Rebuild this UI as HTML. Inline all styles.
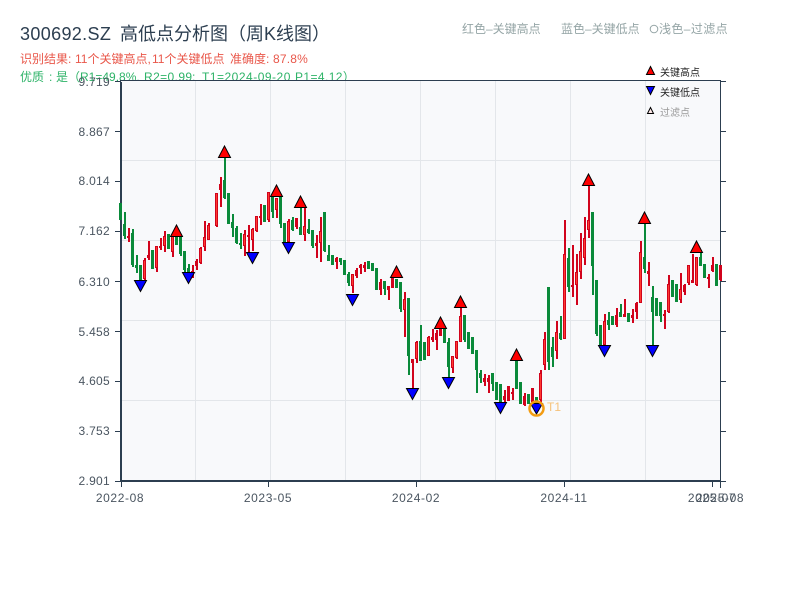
<!DOCTYPE html>
<html><head><meta charset="utf-8"><style>
html,body{margin:0;padding:0;background:#fff}
svg{display:block;font-family:"Liberation Sans","Noto Sans CJK SC",sans-serif}
</style></head><body>
<svg width="800" height="600" viewBox="0 0 800 600" xmlns="http://www.w3.org/2000/svg">
<rect width="800" height="600" fill="#fff"/>
<g font-size="18" fill="#2c3e50">
<text x="20" y="40" letter-spacing=".35">300692.SZ</text>
<text x="120" y="40">高低点分析图（周K线图）</text>
</g>
<g font-size="12" fill="#e9574a">
<text x="20" y="63">识别结果:</text>
<text x="75" y="63">11个关键高点,</text>
<text x="152" y="63">11个关键低点</text>
<text x="230" y="63">准确度:</text>
<text x="273" y="63" letter-spacing=".2">87.8%</text>
</g>
<g font-size="12" fill="#2eb368">
<text x="20" y="81">优质</text>
<text x="49" y="81">:</text>
<text x="56" y="81">是（</text>
<text x="80" y="81">R1=49.8%,</text>
<text x="144" y="81" letter-spacing=".4">R2=0.99</text>
<text x="192" y="81">;</text>
<text x="202" y="81" letter-spacing=".5">T1=2024-09-20</text>
<text x="295" y="81" letter-spacing=".4">P1=4.12）</text>
</g>
<g font-size="12" fill="#95a5a6">
<text x="462" y="33">红色–关键高点</text>
<text x="561" y="33">蓝色–关键低点</text>
<circle cx="654" cy="29" r="3.8" fill="none" stroke="#95a5a6" stroke-width="1"/>
<text x="659" y="33" letter-spacing=".4">浅色–过滤点</text>
</g>
<rect x="121" y="81" width="600" height="400" fill="#f8f9fb"/>
<path d="M195.5 81V480M270.5 81V480M345.5 81V480M420.5 81V480M495.5 81V480M570.5 81V480M645.5 81V480M121 160.5H720M121 240.5H720M121 320.5H720M121 400.5H720" stroke="#e3e6ea" stroke-width="1" fill="none"/>
<path d="M120 80.5H721" stroke="#2c3e50" stroke-width="1"/>
<path d="M720.5 80V488" stroke="#2c3e50" stroke-width="1"/>
<path d="M121 82V482" stroke="#2c3e50" stroke-width="2"/>
<path d="M120 481H721" stroke="#2c3e50" stroke-width="2"/>
<path d="M115 81.5H121M115 131.5H121M115 181.5H121M115 231.5H121M115 281.5H121M115 331.5H121M115 381.5H121M115 431.5H121M115 481.5H121M720 81.5H726M720 131.5H726M720 181.5H726M720 231.5H726M720 281.5H726M720 331.5H726M720 381.5H726M720 431.5H726M720 481.5H726M121.5 482V487M268.5 482V487M416.5 482V487M564.5 482V487M712.5 482V487M720.5 482V487" stroke="#2c3e50" stroke-width="1"/>
<g font-size="12" fill="#4a5560" text-anchor="end" letter-spacing=".3">
<text x="110" y="86">9.719</text>
<text x="110" y="136">8.867</text>
<text x="110" y="185">8.014</text>
<text x="110" y="235">7.162</text>
<text x="110" y="286">6.310</text>
<text x="110" y="336">5.458</text>
<text x="110" y="385">4.605</text>
<text x="110" y="435">3.753</text>
<text x="110" y="485">2.901</text>
</g>
<g font-size="12" fill="#4a5560" text-anchor="middle" letter-spacing=".6">
<text x="120" y="502">2022-08</text>
<text x="268" y="502">2023-05</text>
<text x="416" y="502">2024-02</text>
<text x="564" y="502">2024-11</text>
<text x="712" y="502">2025-07</text>
<text x="720" y="502">2025-08</text>
</g>
<g transform="translate(1,0)" stroke-width="2" fill="none">
<path stroke="#0a8a3a" d="M120 203V220M124 212V239M132 229V267M136 255V273M140 265V280M152 250V269M168 234V249M176 236V245M180 236V256M184 251V273M188 264V277M224 158V199M228 193V224M232 214V237M236 226V244M240 233V249M264 205V222M272 197V218M280 197V228M284 223V242M292 217V231M300 207V235M308 219V234M312 230V248M324 212V252M328 245V261M332 255V265M340 258V265M344 260V275M348 272V286M368 261V269M372 263V271M376 268V290M384 281V295M396 279V288M400 282V312M408 298V375M420 325V361M424 342V360M444 329V343M448 338V377M464 315V342M468 332V349M472 337V354M476 350V393M480 370V383M492 373V391M496 382V400M500 384V402M516 360V389M520 382V404M528 394V404M536 397V405M548 287V370M552 337V367M560 316V340M568 248V292M592 212V295M596 280V336M600 325V345M608 312V330M612 316V325M620 304V317M628 313V322M644 223V273M652 286V345M656 298V316M660 302V322M672 280V297M676 284V302M700 250V266M704 264V278M716 264V286"/>
<path stroke="#d1031c" d="M128 228V242M144 258V283M148 241V260M156 246V272M160 238V250M164 231V252M172 236V257M192 265V278M196 259V270M200 247V264M204 221V251M208 223V240M216 193V227M220 177V207M244 230V256M248 225V252M252 228V251M256 216V232M260 204V225M268 192V222M276 198V218M288 219V242M296 218V229M304 207V241M316 235V258M320 217V262M336 257V269M352 274V293M356 268V278M360 264V274M364 262V272M380 279V295M388 286V300M392 278V288M404 292V337M412 359V388M416 341V363M428 336V356M432 329V342M436 330V350M440 327V336M452 356V373M456 341V359M460 308V342M484 374V386M488 375V393M504 390V402M508 386V401M512 388V400M524 393V406M532 388V402M540 370V403M544 332V370M556 321V359M564 220V339M572 245V297M576 254V305M580 233V279M584 217V265M588 186V238M604 314V345M616 308V327M624 299V317M632 309V323M636 302V319M640 241V303M648 262V286M664 310V329M668 275V313M680 273V303M684 284V295M688 265V285M692 254V283M696 257V286M708 274V288M712 257V272M720 265V281"/>
</g>
<g transform="translate(.5,0)" stroke-width="3" fill="none">
<path stroke="#0a8a3a" d="M120 203V220M124 224V236M132 233V265M136 265V268M140 265V280M152 250V269M168 234V249M176 236V245M180 236V254M184 251V270M188 268V277M224 180V198M228 193V224M232 222V228M236 228V243M240 243V245M264 205V222M272 197V212M280 197V224M284 223V242M292 220V230M300 227V235M308 229V233M312 230V246M324 212V251M328 255V261M332 255V265M340 258V262M344 260V275M348 274V283M368 261V269M372 263V271M376 268V290M384 281V289M396 279V288M400 282V309M408 298V356M420 341V361M424 342V360M444 329V343M448 342V367M464 315V340M468 332V349M472 337V354M476 350V370M480 373V378M492 373V384M496 382V400M500 384V402M516 360V389M520 382V404M528 394V404M536 397V405M548 287V362M552 347V357M560 333V339M568 258V287M592 212V266M596 280V334M600 325V345M608 320V325M612 316V325M620 312V317M628 313V322M644 257V269M652 297V312M656 298V316M660 302V316M672 280V297M676 284V302M700 257V266M704 264V278M716 264V286"/>
<path stroke="#d1031c" d="M128 236V238M144 260V279M148 255V258M156 246V268M160 246V248M164 236V246M172 236V252M192 271V274M196 261V266M200 248V263M204 237V247M208 225V240M216 193V226M220 184V190M244 234V246M248 235V237M252 229V240M256 216V231M260 216V218M268 192V220M276 198V210M288 221V242M296 218V227M304 226V235M316 243V246M320 231V243M336 258V262M352 274V286M356 270V276M360 265V268M364 265V268M380 282V290M388 286V290M392 278V288M404 299V310M412 359V363M416 342V359M428 337V356M432 337V340M436 333V340M440 327V336M452 356V368M456 341V358M460 316V342M484 378V382M488 378V382M504 396V400M508 386V401M512 392V394M524 396V405M532 388V402M540 373V400M544 339V365M556 332V351M564 254V339M572 285V287M576 272V285M580 251V272M584 238V258M588 220V230M604 321V345M616 315V325M624 314V317M632 315V318M636 303V312M640 252V303M648 271V274M664 314V316M668 284V312M680 289V300M684 285V292M688 265V283M692 280V283M696 257V285M708 277V279M712 265V271M720 265V280"/>
<path stroke="#ff3b30" stroke-width="1" d="M144 261V278M156 247V267M164 237V245M172 237V251M200 249V262M204 238V246M208 226V239M216 194V225M244 235V245M252 230V239M256 217V230M268 193V219M276 199V209M288 222V241M304 227V234M320 232V242M352 275V285M404 300V309M416 343V358M428 338V355M452 357V367M456 342V357M460 317V341M540 374V399M544 340V364M556 333V350M564 255V338M576 273V284M580 252V271M584 239V257M588 221V229M604 322V344M640 253V302M668 285V311M680 290V299M688 266V282M696 258V284"/>
</g>
<g fill="#f00" stroke="#000" stroke-width="1" stroke-linejoin="miter">
<path d="M224.5 146L230.5 157.5H218.5ZM176.5 225L182.5 236.5H170.5ZM276.5 185L282.5 196.5H270.5ZM300.5 196L306.5 207.5H294.5ZM396.5 266L402.5 277.5H390.5ZM440.5 317L446.5 328.5H434.5ZM460.5 296L466.5 307.5H454.5ZM516.5 349L522.5 360.5H510.5ZM588.5 174L594.5 185.5H582.5ZM644.5 212L650.5 223.5H638.5ZM696.5 241L702.5 252.5H690.5Z"/>
</g>
<g fill="#00f" stroke="#000" stroke-width="1" stroke-linejoin="miter">
<path d="M140.5 291.5L134.5 280.5H146.5ZM188.5 283.5L182.5 272.5H194.5ZM252.5 263.5L246.5 252.5H258.5ZM288.5 253.5L282.5 242.5H294.5ZM352.5 305.5L346.5 294.5H358.5ZM412.5 399.5L406.5 388.5H418.5ZM448.5 388.5L442.5 377.5H454.5ZM500.5 413.5L494.5 402.5H506.5ZM536.5 414L530.5 403.5H542.5ZM604.5 356.5L598.5 345.5H610.5ZM652.5 356.5L646.5 345.5H658.5Z"/>
</g>
<circle cx="536.5" cy="408.5" r="7" fill="none" stroke="#f39c12" stroke-width="2.5"/>
<text x="547" y="411" font-size="12" fill="#f5c27a">T1</text>
<path d="M650.5 66.5L654.5 74.5H646.5Z" fill="#f00" stroke="#000" stroke-width="1"/>
<path d="M650.5 94.5L646.5 86.5H654.5Z" fill="#00f" stroke="#000" stroke-width="1"/>
<path d="M650.5 107.5L653.5 113.5H647.5Z" fill="#ffe9e9" stroke="#000" stroke-width="1"/>
<g font-size="10">
<text x="660" y="76" fill="#222">关键高点</text>
<text x="660" y="96" fill="#222">关键低点</text>
<text x="660" y="116" fill="#999">过滤点</text>
</g>
</svg>
</body></html>
